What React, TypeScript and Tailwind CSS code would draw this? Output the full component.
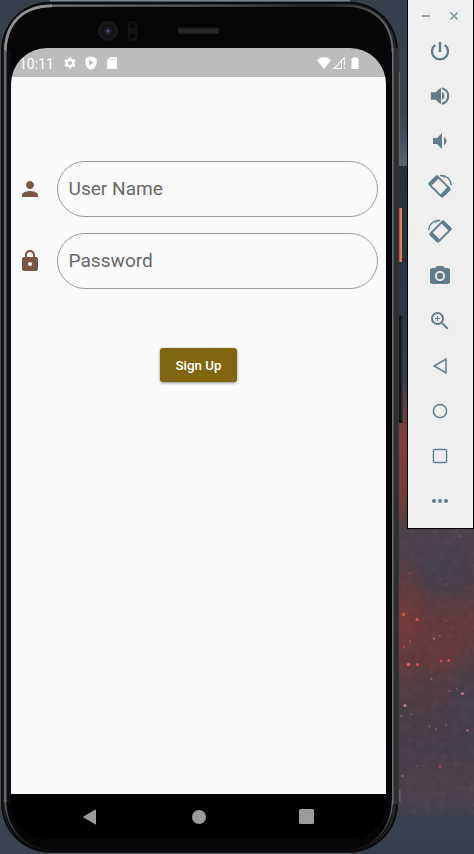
import type { ReactNode } from "react";
import {
  MdSettings,
  MdPerson,
  MdLock,
  MdVolumeDown,
  MdPhotoCamera,
  MdZoomIn,
} from "react-icons/md";

const stars: [number, number, number, string][] = [
  [403.5, 614.5, 1.7, "#d3534d"],
  [417, 619.5, 1.6, "#d06360"],
  [446, 621, 1, "#a04748"],
  [434, 638.5, 1.1, "#ba7376"],
  [410, 641, 1, "#a6514c"],
  [404, 647, 1.2, "#a84440"],
  [408.5, 664.5, 1.8, "#dc5960"],
  [417.5, 664.5, 1.6, "#d4505a"],
  [441, 661, 1.6, "#c74d50"],
  [448.5, 660.5, 1.5, "#c74d50"],
  [431.5, 679, 1.1, "#9c5960"],
  [449.5, 691, 1.1, "#9c5960"],
  [462.5, 693.5, 1.6, "#c8707c"],
  [457, 689, 1, "#96505a"],
  [405, 705.5, 1.5, "#c88086"],
  [401.5, 716, 1, "#a35a62"],
  [411.5, 714.5, 1, "#8f5860"],
  [429.5, 726.5, 1, "#9e5c68"],
  [436, 729, 1, "#92545e"],
  [446, 725, 1, "#92545e"],
  [467.5, 730.5, 1.3, "#a8626e"],
  [440, 766.5, 1.3, "#9c4f5c"],
  [402.5, 776, 1.2, "#a85563"],
  [417, 766, 0.9, "#8a4a55"],
  [460, 536, 1, "#7b5a60"],
  [409.5, 573, 1, "#8b4c4c"],
  [447.5, 584, 1, "#70545c"],
  [451.5, 627, 0.9, "#964046"],
  [440, 636, 0.9, "#9a6066"],
];

function Backdrop() {
  return (
    <svg className="absolute inset-0" width="474" height="854" viewBox="0 0 474 854" aria-hidden="true">
      <defs>
        <linearGradient id="sky" x1="0" y1="0" x2="0" y2="1">
          <stop offset="0" stopColor="#373f4c" />
          <stop offset=".13" stopColor="#3a414d" />
          <stop offset=".165" stopColor="#454e5a" />
          <stop offset=".194" stopColor="#5c6470" />
          <stop offset=".195" stopColor="#262f39" />
          <stop offset=".36" stopColor="#2b3644" />
          <stop offset=".44" stopColor="#334052" />
          <stop offset=".475" stopColor="#594149" />
          <stop offset=".51" stopColor="#803f40" />
          <stop offset=".58" stopColor="#6e3a3d" />
          <stop offset=".63" stopColor="#49404a" />
          <stop offset=".68" stopColor="#4b3c45" />
          <stop offset=".73" stopColor="#603a3d" />
          <stop offset=".79" stopColor="#523b41" />
          <stop offset=".87" stopColor="#433d47" />
          <stop offset=".93" stopColor="#4b404a" />
          <stop offset=".965" stopColor="#384150" />
          <stop offset="1" stopColor="#343f4c" />
        </linearGradient>
        <radialGradient id="ember">
          <stop offset="0" stopColor="#7d3b36" stopOpacity=".7" />
          <stop offset="1" stopColor="#7d3b36" stopOpacity="0" />
        </radialGradient>
        <radialGradient id="dusk">
          <stop offset="0" stopColor="#3f414e" stopOpacity=".8" />
          <stop offset="1" stopColor="#3f414e" stopOpacity="0" />
        </radialGradient>
        <filter id="mottle" x="0" y="0" width="1" height="1">
          <feTurbulence type="fractalNoise" baseFrequency=".13" numOctaves="3" seed="6" />
          <feColorMatrix values="0 0 0 0 .5  0 0 0 0 .2  0 0 0 0 .2  1.3 0 0 0 -.52" />
        </filter>
        <linearGradient id="topEdge" x1="0" x2="400" y1="0" y2="0" gradientUnits="userSpaceOnUse">
          <stop offset="0" stopColor="#999" />
          <stop offset=".15" stopColor="#777" />
          <stop offset=".6" stopColor="#4a4a4a" />
          <stop offset=".8" stopColor="#222" />
          <stop offset="1" stopColor="#6b6b6b" />
        </linearGradient>
        <linearGradient id="bottomRim" x1="0" x2="0" y1="800" y2="850" gradientUnits="userSpaceOnUse">
          <stop offset="0" stopColor="#676b6d" />
          <stop offset=".5" stopColor="#3c3e40" />
          <stop offset="1" stopColor="#0c0c0e" />
        </linearGradient>
        <radialGradient id="lens">
          <stop offset="0" stopColor="#676c91" />
          <stop offset=".2" stopColor="#222430" />
          <stop offset=".55" stopColor="#0e0e11" />
          <stop offset=".85" stopColor="#1b1b1c" />
          <stop offset="1" stopColor="#141415" />
        </radialGradient>
      </defs>
      <rect width="474" height="854" fill="url(#sky)" />
      <ellipse cx="404" cy="620" rx="26" ry="75" fill="url(#ember)" />
      <ellipse cx="442" cy="652" rx="32" ry="30" fill="url(#ember)" opacity=".6" />
      <ellipse cx="401" cy="470" rx="10" ry="60" fill="url(#ember)" />
      <ellipse cx="445" cy="565" rx="38" ry="36" fill="url(#dusk)" />
      <ellipse cx="465" cy="705" rx="24" ry="60" fill="url(#dusk)" />
      <rect x="399" y="529" width="75" height="285" filter="url(#mottle)" opacity=".15" />
      {stars.map(([x, y, r, fill], i) => (
        <circle key={i} cx={x} cy={y} r={r} fill={fill} />
      ))}
      <path d="M0 790h50v64H0z" fill="#3d4350" />
      {/* side buttons */}
      <rect x="398" y="208" width="4" height="54" fill="#e37a62" />
      <rect x="398" y="208" width="1.8" height="54" fill="#b94f39" />
      <rect x="398" y="316" width="4.5" height="107" rx="1" fill="#141414" />
      <rect x="401.3" y="318" width="1" height="103" fill="#3d3d3d" />
      <rect x="399" y="72" width="1" height="94" fill="#62666b" />
      <rect x="399" y="790" width="1.5" height="12" fill="#60666b" />
      {/* device shell */}
      <rect x="0" y="0" width="399" height="854" rx="50" fill="#222426" />
      <rect x=".5" y=".5" width="398" height="853" rx="49.5" fill="none" stroke="#4d5256" />
      <path d="M50 .8h300" stroke="#7b868e" strokeWidth="1.6" />
      <rect x="2.2" y="3" width="394.8" height="848.6" rx="48" fill="none" stroke="#0b0c0d" strokeWidth="2" />
      <rect x="5" y="5.2" width="387.5" height="846" rx="45" fill="#060608" />
      <path d="M5.2 802V52C5.2 23 22 5.7 52 5.7H345C374 5.7 392.5 23 392.5 52" fill="none" stroke="url(#topEdge)" strokeWidth="2" />
      <path d="M5.2 52C6 23 23 5.9 52 5.9" fill="none" stroke="#909090" strokeWidth="2.6" />
      <path d="M5.2 800c1 30 19 49 48 50.5H345c29-1.500 46.5-20.500 47.5-50.500" fill="none" stroke="url(#bottomRim)" strokeWidth="1.5" />
      <rect x="394" y="48" width="4.8" height="756" fill="#2d2f30" />
      <rect x="392" y="48" width="1.6" height="756" fill="#6b6d6e" />
      <rect x="4" y="50" width="2.4" height="752" fill="#62666a" />
      <rect x="7" y="50" width="4" height="752" fill="#0c0e11" />
      <circle cx="108" cy="31" r="10" fill="url(#lens)" />
      <rect x="128" y="21" width="9.5" height="20" rx="4.5" fill="#141415" />
      <circle cx="132.5" cy="25.5" r="3" fill="#09090a" />
      <circle cx="132.5" cy="36" r="3" fill="#09090a" />
      <rect x="177.5" y="27.5" width="42" height="6.5" rx="3" fill="#1f1f1f" />
      <rect x="179" y="29.5" width="39" height="3" rx="1" fill="#292929" />
    </svg>
  );
}

function StatusBar() {
  return (
    <div className="flex h-[29px] items-center bg-[#bcbcbc] pl-2 text-white">
      <span className="w-[43.5px] pt-[2px] text-[14px] leading-none">10:11</span>
      <MdSettings className="size-[14px]" />
      <svg className="ml-[7px] h-[14px] w-[14px]" viewBox="0 0 14 14" fill="currentColor">
        <path fillRule="evenodd" d="M7 .3 12.6 2.5v4.2c0 3.4-2.4 6-5.6 7-3.2-1-5.600-3.600-5.600-7V2.500ZM5.100 4v5.600L9.900 6.800Z" />
      </svg>
      <svg className="ml-[8px] h-[14px] w-[12px]" viewBox="0 0 12 14">
        <path fill="#fff" d="M4.3 1h5.5q1.2 0 1.2 1.2v9.6q0 1.2-1.2 1.2H2.2Q1 13 1 11.8V4.3Z" />
        <path fill="none" stroke="#cfcfcf" d="M5 2.3v2M7 2.3v2M9 2.3v2" />
      </svg>
      <svg className="ml-[199.5px] h-[14px] w-[14px]" viewBox="0 0 14 14" fill="currentColor">
        <path d="M7 13 .2 4.2C1.5 2 4 1.2 7 1.2s5.5.8 6.8 3Z" />
      </svg>
      <svg className="ml-[1px] h-[14px] w-[14px]" viewBox="0 0 14 14" fill="none" stroke="#fff">
        <path d="M9.5 12.5H2L12.2 1.8V4" strokeWidth="1.1" />
        <path d="M9.5 6v6.5M12.4 4.5v5M12.4 11v1.7" strokeWidth="1" />
      </svg>
      <svg className="ml-[5px] h-[14px] w-[8px]" viewBox="0 0 8 14" fill="currentColor">
        <path d="M2.5 1h3v1H7.5v11H.5V2h2Z" />
      </svg>
    </div>
  );
}

function Field({ icon, label }: { icon: ReactNode; label: string }) {
  return (
    <div className="flex h-14 items-center">
      <span className="flex w-[46px] justify-start pl-[7px] text-[#795548]">{icon}</span>
      <div className="flex h-14 w-[321px] items-center rounded-full border border-[#999] pt-px pl-[10.5px] text-[19.1px] text-[#686868]">
        {label}
      </div>
    </div>
  );
}

function Rotate({ flip = false }: { flip?: boolean }) {
  return (
    <svg className={flip ? "size-6 -scale-x-100" : "size-6"} viewBox="0 0 24 24" fill="none" stroke="currentColor">
      <g transform="rotate(45 11.5 12.5)">
        <rect x="2.2" y="6.8" width="18.6" height="11.4" rx="1.3" strokeWidth="1.9" />
        <path d="M3.5 6.8v11.4M19.4 6.8v11.4" strokeWidth="3.4" />
      </g>
      <path d="M12 1.5C18 .8 23 5 23.3 11.3" strokeWidth="1.4" />
      <path d="m11 1.4 4.5-.2 2.8 3.2-3-1.3Z" fill="currentColor" stroke="none" />
    </svg>
  );
}

function Toolbar() {
  const tools: ReactNode[] = [
    <svg className="size-6" viewBox="0 0 24 24" fill="none" stroke="currentColor" strokeWidth="2.4">
      <path d="M12 2.9v10.200M7.300 5.900a8 8 0 1 0 9.400 0" />
    </svg>,
    <svg className="size-6" viewBox="0 0 24 24" fill="currentColor">
      <path d="M2.800 8.200v7.600h4.800l5.400 4.800V3.400L7.600 8.200ZM14 7.800v8.400a4.700 4.700 0 0 0 0-8.400" />
      <path d="M14 4.200a8 8 0 0 1 0 15.600" fill="none" stroke="currentColor" strokeWidth="2.200" />
    </svg>,
    <MdVolumeDown className="size-6" />,
    <Rotate />,
    <Rotate flip />,
    <MdPhotoCamera className="size-6" />,
    <MdZoomIn className="size-6" />,
    <svg className="size-6" viewBox="0 0 24 24" fill="none" stroke="currentColor" strokeWidth="1.5">
      <path d="M6.2 12 18 5v14Z" />
    </svg>,
    <svg className="size-6" viewBox="0 0 24 24" fill="none" stroke="currentColor" strokeWidth="1.5">
      <circle cx="12" cy="12" r="6.6" />
    </svg>,
    <svg className="size-6" viewBox="0 0 24 24" fill="none" stroke="currentColor" strokeWidth="1.5">
      <rect x="5.5" y="5.5" width="13" height="13" rx="1" />
    </svg>,
    <svg className="size-6" viewBox="0 0 24 24" fill="currentColor">
      <circle cx="6" cy="12" r="2" />
      <circle cx="12" cy="12" r="2" />
      <circle cx="18" cy="12" r="2" />
    </svg>,
  ];
  return (
    <aside className="relative ml-[21px] flex h-[529px] w-[67px] flex-col border-x border-b border-black bg-[#efefef] text-[#607d8b]">
      <div className="flex h-[28.5px] items-center justify-center gap-[18px] pt-[3px] pr-[2px] text-[#78909c]">
        <svg className="size-[10px]" viewBox="0 0 10 10" stroke="currentColor" strokeWidth="1.5">
          <path d="M1 5h8" />
        </svg>
        <svg className="size-[10px]" viewBox="0 0 10 10" stroke="currentColor" strokeWidth="1.5">
          <path d="m1.5 1.5 7 7M8.5 1.5l-7 7" />
        </svg>
      </div>
      {tools.map((tool, i) => (
        <div key={i} className="flex h-[45px] shrink-0 items-center justify-center pr-px">
          {tool}
        </div>
      ))}
    </aside>
  );
}

export default function App() {
  return (
    <div className="relative h-[854px] w-[474px] overflow-hidden font-['Roboto',sans-serif]">
      <Backdrop />
      <div className="relative flex items-start pl-[11px]">
        <main className="mt-12 flex h-[791px] w-[375px] flex-col overflow-hidden rounded-[36px] bg-black">
          <StatusBar />
          <section className="flex flex-1 flex-col bg-[#fafafa] pt-[84px]">
            <Field icon={<MdPerson className="size-6" />} label="User Name" />
            <div className="h-[15.5px]" />
            <Field icon={<MdLock className="size-6" />} label="Password" />
            <button className="mt-[59.5px] ml-[149px] h-[34px] w-[77px] rounded-[3px] bg-[#806610] pt-px text-[13.3px] font-medium text-white shadow-[0_1px_3px_rgba(0,0,0,.45)]">
              Sign Up
            </button>
          </section>
          <nav className="flex h-[45px] items-center bg-black text-[#9b9b9b]">
            <svg className="ml-[71px] size-4" viewBox="0 0 16 16" fill="currentColor">
              <path d="M.7 8 13 .7q1-.5 1 .5v13.6q0 1-1 .5Z" />
            </svg>
            <span className="ml-[93.5px] size-[14px] rounded-full bg-[#9b9b9b]" />
            <span className="ml-[93.5px] size-[15px] rounded-[1.5px] bg-[#9b9b9b]" />
          </nav>
        </main>
        <Toolbar />
      </div>
    </div>
  );
}
